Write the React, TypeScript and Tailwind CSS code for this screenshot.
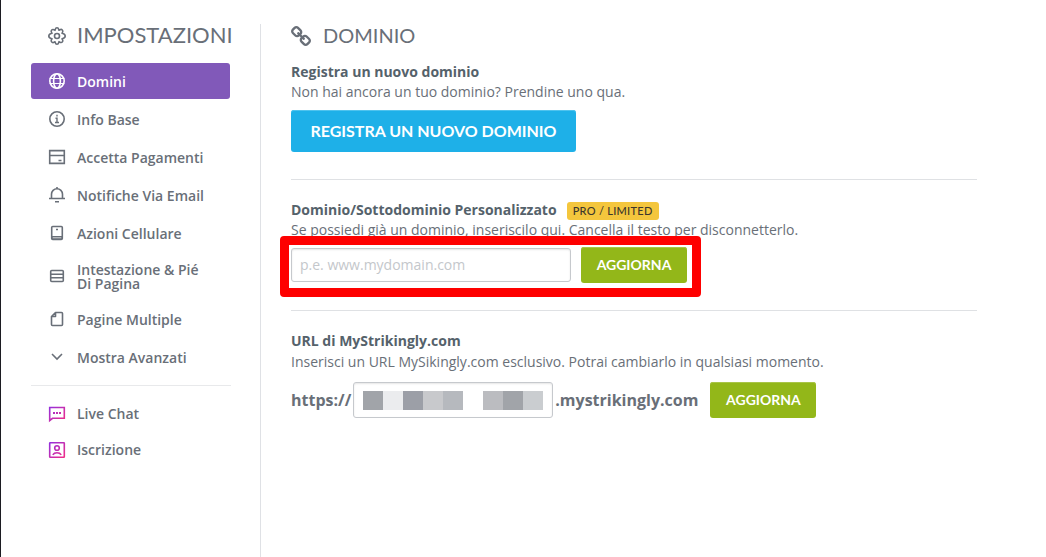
import type { ReactNode } from 'react'

const iconProps = {
  width: 18,
  height: 18,
  viewBox: '0 0 18 18',
  fill: 'none',
  stroke: 'currentColor',
  strokeWidth: 1.6,
  className: 'shrink-0',
  'aria-hidden': true,
}

function GearIcon() {
  return (
    <svg {...iconProps} strokeLinejoin="round">
      <path d="M7.3 2.4Q7.6.8 9 .8t1.7 1.6l.3.9.9-.5q1.4-.8 2.4.2t.2 2.4l-.5.8.9.3q2.3.6 2.3 2.5t-2.3 2.5l-.9.3.5.8q.8 1.4-.2 2.4t-2.4.2l-.9-.5-.3.9Q10.4 17.2 9 17.2t-1.7-1.6l-.3-.9-.9.5q-1.4.8-2.4-.2t-.2-2.4l.5-.8-.9-.3Q.8 10.9.8 9t2.3-2.5l.9-.3-.5-.8q-.8-1.4.2-2.4t2.4-.2l.9.5z" />
      <circle cx="9" cy="9" r="2.5" />
    </svg>
  )
}

function GlobeIcon() {
  return (
    <svg {...iconProps}>
      <circle cx="9" cy="9" r="7.2" />
      <ellipse cx="9" cy="9" rx="3.4" ry="7.2" />
      <path d="M1.7 6.5h14.6M1.7 11.5h14.6" strokeWidth="1.2" />
    </svg>
  )
}

function InfoIcon() {
  return (
    <svg {...iconProps}>
      <circle cx="9" cy="9" r="7.2" />
      <path d="M9 4.8v1.7M7.5 8.2H9v4M7 12.5h4" strokeWidth="1.4" />
    </svg>
  )
}

function CardIcon() {
  return (
    <svg {...iconProps}>
      <path d="M1.7 2.6h14.6v12.8H1.7zM1.7 7.5h14.6M10.5 12.5h3" />
    </svg>
  )
}

function BellIcon() {
  return (
    <svg {...iconProps}>
      <path d="M1 12.5h16M3.5 12.5V8.2a5.5 5.5 0 0 1 11 0v4.3M9 1v1.7M7 15.7h4" />
    </svg>
  )
}

function PhoneIcon() {
  return (
    <svg {...iconProps}>
      <rect x="3.7" y="2.5" width="10.6" height="13" rx="1" />
      <path d="M8 5.5h2" />
      <path d="M4 12.5h10V15H4z" fill="currentColor" fillOpacity=".5" strokeWidth="1" />
    </svg>
  )
}

function RowsIcon() {
  return (
    <svg {...iconProps}>
      <rect x="2.7" y="3.5" width="12.6" height="11" rx="1" />
      <path d="M3 7.2h12M3 10.8h12" />
    </svg>
  )
}

function PageIcon() {
  return (
    <svg {...iconProps} strokeLinejoin="round">
      <path d="M7.5 2.5h6a1 1 0 0 1 1 1v11a1 1 0 0 1-1 1h-9a1 1 0 0 1-1-1v-8zv4h-4" />
    </svg>
  )
}

function ChevronIcon() {
  return (
    <svg {...iconProps}>
      <path d="M4 6l5 5 5-5" />
    </svg>
  )
}

function PinkGradient({ id }: { id: string }) {
  return (
    <defs>
      <linearGradient id={id} x1="1" y1="1" x2="17" y2="17" gradientUnits="userSpaceOnUse">
        <stop stopColor="#8f30e0" />
        <stop offset="1" stopColor="#f52d85" />
      </linearGradient>
    </defs>
  )
}

function ChatIcon() {
  return (
    <svg {...iconProps} stroke="url(#chat)">
      <PinkGradient id="chat" />
      <path d="M1.7 15.5v-13h14.6v10.8H4.5z" />
      <path d="M5 7h2v2H5zM8 7h2v2H8zM11 7h2v2h-2z" fill="url(#chat)" stroke="none" />
    </svg>
  )
}

function AccountIcon() {
  return (
    <svg {...iconProps} stroke="url(#account)">
      <PinkGradient id="account" />
      <rect x="1.7" y="1.7" width="14.6" height="14.6" rx=".5" />
      <circle cx="9" cy="7" r="2.3" />
      <path d="M4.8 13.8q1.2-2 4.2-2t4.2 2" />
    </svg>
  )
}

function LinkIcon() {
  return (
    <svg width="20" height="20" viewBox="16 16 1632 1632" fill="currentColor" aria-hidden>
      <path d="M1456 1216q0-40-28-68l-208-208q-28-28-68-28-42 0-72 32 3 3 19 18.5t21.5 21.5 15 19 13 25.5 3.5 27.5q0 40-28 68t-68 28q-15 0-27.5-3.5t-25.5-13-19-15-21.5-21.5-18.5-19q-33 31-33 73 0 40 28 68l206 207q27 27 68 27 40 0 68-26l147-146q28-28 28-67zm-703-705q0-40-28-68l-206-207q-28-28-68-28-39 0-68 27l-147 146q-28 28-28 67 0 40 28 68l208 208q27 27 68 27 42 0 72-31-3-3-19-18.5t-21.5-21.5-15-19-13-25.5-3.5-27.5q0-40 28-68t68-28q15 0 27.5 3.5t25.5 13 19 15 21.5 21.5 18.5 19q33-31 33-73zm895 705q0 120-85 203l-147 146q-83 83-203 83-121 0-204-85l-206-207q-83-83-83-203 0-123 88-209l-88-88q-86 88-208 88-120 0-204-84l-208-208q-84-84-84-204t85-203l147-146q83-83 203-83 121 0 204 85l206 207q83 83 83 203 0 123-88 209l88 88q86-88 208-88 120 0 204 84l208 208q84 84 84 204z" />
    </svg>
  )
}

const NAV = [
  { label: 'Domini', icon: <GlobeIcon />, active: true },
  { label: 'Info Base', icon: <InfoIcon /> },
  { label: 'Accetta Pagamenti', icon: <CardIcon /> },
  { label: 'Notifiche Via Email', icon: <BellIcon /> },
  { label: 'Azioni Cellulare', icon: <PhoneIcon /> },
  { label: 'Intestazione & Pié Di Pagina', icon: <RowsIcon />, tall: true },
  { label: 'Pagine Multiple', icon: <PageIcon /> },
  { label: 'Mostra Avanzati', icon: <ChevronIcon /> },
]

const MASK = ['#a1a4a9', '#ebecee', '#9c9fa7', '#c8c9cc', '#b6b9be', '#ffffff', '#bbbcc0', '#a1a4a9', '#cacdd0']

interface NavItemProps {
  label: string
  icon: ReactNode
  active?: boolean
  tall?: boolean
}

function NavItem({ label, icon, active, tall }: NavItemProps) {
  return (
    <a
      href="#"
      className={`flex items-center gap-[11px] rounded-[3px] pr-6 pl-[17px] leading-[14px] ${
        active ? 'bg-[#8159b9] text-white' : 'text-[#696f78]'
      } ${tall ? 'h-[46px]' : 'h-9'}`}
    >
      {icon}
      <span>{label}</span>
    </a>
  )
}

function UpdateButton() {
  return (
    <button
      type="button"
      className="h-9 w-[106px] rounded-[3px] bg-[#93b719] font-['Lato',sans-serif] text-sm font-bold text-white shadow-[inset_0_1px_0_#a9c547]"
    >
      AGGIORNA
    </button>
  )
}

const inputStyle = 'rounded-[3px] border border-[#c6c9cd] bg-white px-2 shadow-[inset_0_1px_2px_#0000001a] outline-none'

export default function App() {
  return (
    <div className="flex min-h-screen border-l border-[#1c1c22] bg-white pt-6 font-['Open_Sans',sans-serif] text-sm text-[#696f78]">
      <aside className="w-[230px] shrink-0 pl-[30px]">
        <h1 className="flex h-6 items-center gap-[11px] pl-[17px] font-['Lato',sans-serif] text-[22px] leading-6">
          <GearIcon />
          <span className="pb-0.5">IMPOSTAZIONI</span>
        </h1>
        <nav className="mt-[15px] mr-px flex flex-col gap-0.5 font-semibold [&_span]:pt-0.5">
          {NAV.map((item) => (
            <NavItem key={item.label} {...item} />
          ))}
        </nav>
        <nav className="mt-[10px] border-t border-[#e8e9eb] pt-[10px] font-semibold">
          <NavItem label="Live Chat" icon={<ChatIcon />} />
          <NavItem label="Iscrizione" icon={<AccountIcon />} />
        </nav>
      </aside>

      <main className="ml-[29px] max-w-[717px] min-w-0 flex-1 border-l border-[#dfe1e5] pl-[30px]">
        <h2 className="flex h-6 items-center gap-3 font-['Lato',sans-serif] text-xl leading-6">
          <LinkIcon />
          <span className="pb-0.5">DOMINIO</span>
        </h2>

        <section className="mt-[14px] border-b border-[#dfe1e4] pb-[27px] leading-5">
          <h3 className="font-bold text-[#55626b]">Registra un nuovo dominio</h3>
          <p>Non hai ancora un tuo dominio? Prendine uno qua.</p>
          <button
            type="button"
            className="mt-2 h-[42px] w-[285px] rounded-[3px] bg-[#1eb0e8] font-['Lato',sans-serif] text-base font-bold text-white shadow-[inset_0_1px_0_#4fc3ee]"
          >
            REGISTRA UN NUOVO DOMINIO
          </button>
        </section>

        <section className="border-b border-[#dfe1e4] pt-5 pb-[27px] leading-5">
          <div className="flex h-5 items-center gap-[10px]">
            <h3 className="font-bold text-[#55626b]">
              <label htmlFor="domain">Dominio/Sottodominio Personalizzato</label>
            </h3>
            <span className="mt-0.5 flex h-[18px] w-[92px] items-center justify-center rounded-[3px] bg-[#f4c63d] font-['Lato',sans-serif] text-[11px] font-medium tracking-wide whitespace-nowrap text-[#3d372c]">
              PRO / LIMITED
            </span>
          </div>
          <p>Se possiedi già un dominio, inseriscilo qui. Cancella il testo per disconnetterlo.</p>
          <div className="relative mt-[7px] flex w-fit items-center gap-[10px]">
            <input
              id="domain"
              type="text"
              placeholder="p.e. www.mydomain.com"
              className={`${inputStyle} h-[34px] w-[280px] pb-0.5 placeholder:text-[#c4c7cb]`}
            />
            <UpdateButton />
            <div className="pointer-events-none absolute -top-[11px] -right-[14px] -bottom-[14px] -left-[11px] rounded-[4px] border-[9px] border-[#fe0000]" />
          </div>
        </section>

        <section className="pt-5 leading-5">
          <h3 className="font-bold text-[#55626b]">
            <label htmlFor="subdomain">URL di MyStrikingly.com</label>
          </h3>
          <p className="mt-px">Inserisci un URL MySikingly.com esclusivo. Potrai cambiarlo in qualsiasi momento.</p>
          <div className="mt-[10px] flex items-center text-base font-bold">
            <span>https://</span>
            <div className="relative mx-0.5">
              <input id="subdomain" type="text" className={`${inputStyle} block h-9 w-[200px]`} />
              <div className="pointer-events-none absolute top-[9px] left-[10px] flex">
                {MASK.map((color, i) => (
                  <span key={i} className="h-[19px] w-5" style={{ backgroundColor: color }} />
                ))}
              </div>
            </div>
            <span className="mr-3">.mystrikingly.com</span>
            <UpdateButton />
          </div>
        </section>
      </main>
    </div>
  )
}
